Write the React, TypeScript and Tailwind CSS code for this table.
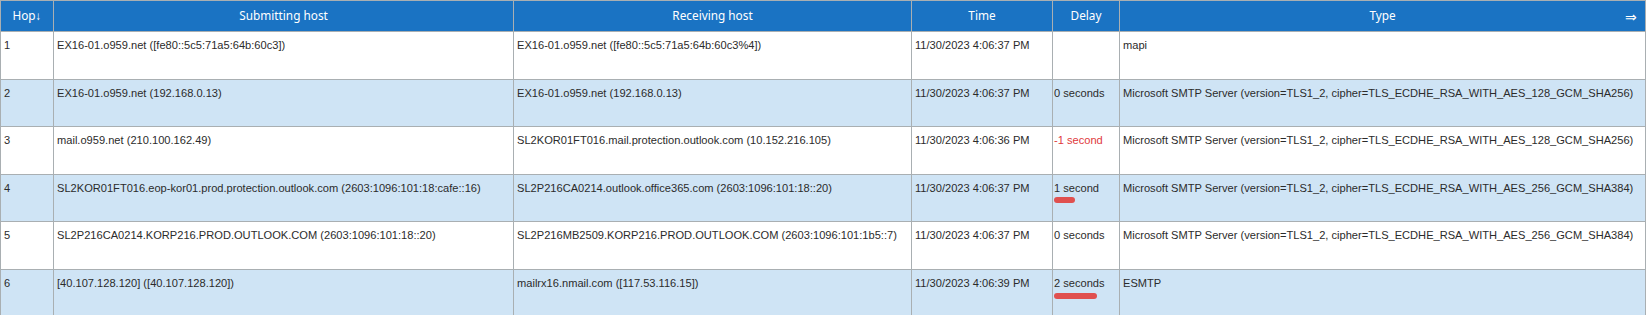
const rows = [
  {
    hop: "1",
    from: "EX16-01.o959.net ([fe80::5c5:71a5:64b:60c3])",
    by: "EX16-01.o959.net ([fe80::5c5:71a5:64b:60c3%4])",
    time: "11/30/2023 4:06:37 PM",
    delay: "",
    type: "mapi",
  },
  {
    hop: "2",
    from: "EX16-01.o959.net (192.168.0.13)",
    by: "EX16-01.o959.net (192.168.0.13)",
    time: "11/30/2023 4:06:37 PM",
    delay: "0 seconds",
    type: "Microsoft SMTP Server (version=TLS1_2, cipher=TLS_ECDHE_RSA_WITH_AES_128_GCM_SHA256)",
  },
  {
    hop: "3",
    from: "mail.o959.net (210.100.162.49)",
    by: "SL2KOR01FT016.mail.protection.outlook.com (10.152.216.105)",
    time: "11/30/2023 4:06:36 PM",
    delay: "-1 second",
    negative: true,
    type: "Microsoft SMTP Server (version=TLS1_2, cipher=TLS_ECDHE_RSA_WITH_AES_128_GCM_SHA256)",
  },
  {
    hop: "4",
    from: "SL2KOR01FT016.eop-kor01.prod.protection.outlook.com (2603:1096:101:18:cafe::16)",
    by: "SL2P216CA0214.outlook.office365.com (2603:1096:101:18::20)",
    time: "11/30/2023 4:06:37 PM",
    delay: "1 second",
    mark: "short",
    type: "Microsoft SMTP Server (version=TLS1_2, cipher=TLS_ECDHE_RSA_WITH_AES_256_GCM_SHA384)",
  },
  {
    hop: "5",
    from: "SL2P216CA0214.KORP216.PROD.OUTLOOK.COM (2603:1096:101:18::20)",
    by: "SL2P216MB2509.KORP216.PROD.OUTLOOK.COM (2603:1096:101:1b5::7)",
    time: "11/30/2023 4:06:37 PM",
    delay: "0 seconds",
    type: "Microsoft SMTP Server (version=TLS1_2, cipher=TLS_ECDHE_RSA_WITH_AES_256_GCM_SHA384)",
  },
  {
    hop: "6",
    from: "[40.107.128.120] ([40.107.128.120])",
    by: "mailrx16.nmail.com ([117.53.116.15])",
    time: "11/30/2023 4:06:39 PM",
    delay: "2 seconds",
    mark: "long",
    type: "ESMTP",
  },
];

export default function App() {
  return (
    <div className="w-[1646px] h-[315px] overflow-hidden bg-white font-['Liberation_Sans',Arial,sans-serif] text-[11.1px] text-[#2b2b2b]">
      <table className="w-[1646px] table-fixed border-collapse border border-[#a9afb2]">
        <colgroup>
          <col className="w-[53px]" />
          <col className="w-[460px]" />
          <col className="w-[398px]" />
          <col className="w-[141px]" />
          <col className="w-[67px]" />
          <col />
        </colgroup>
        <thead>
          <tr className="h-[31px] bg-[#1a73c3] font-['Noto_Sans',sans-serif] text-[11.8px] text-white">
            <th className="border border-[#a9afb2] font-normal">Hop↓</th>
            <th className="border border-[#a9afb2] font-normal">Submitting host</th>
            <th className="border border-[#a9afb2] font-normal">Receiving host</th>
            <th className="border border-[#a9afb2] font-normal">Time</th>
            <th className="border border-[#a9afb2] font-normal">Delay</th>
            <th className="relative border border-[#a9afb2] font-normal">
              Type
              <span className="absolute right-[8px] top-[5px] text-[14px]">⇒</span>
            </th>
          </tr>
        </thead>
        <tbody>
          {rows.map((r, i) => (
            <tr key={r.hop} className={`h-[47.6px] ${i % 2 === 1 ? "bg-[#cfe4f5]" : "bg-white"}`}>
              <td className="border border-[#a9afb2] px-[3px] pt-[5px] align-top">{r.hop}</td>
              <td className="border border-[#a9afb2] px-[3px] pt-[5px] align-top whitespace-nowrap">{r.from}</td>
              <td className="border border-[#a9afb2] px-[3px] pt-[5px] align-top whitespace-nowrap">{r.by}</td>
              <td className="border border-[#a9afb2] px-[3px] pt-[5px] align-top whitespace-nowrap">{r.time}</td>
              <td className="border border-[#a9afb2] px-[1px] pt-[5px] align-top whitespace-nowrap">
                <span className={r.negative ? "text-[#e0393b]" : ""}>{r.delay}</span>
                {r.mark === "short" && <div className="mt-[1px] h-[6px] w-[21px] rounded-full bg-[#e0504f]" />}
                {r.mark === "long" && <div className="mt-[1px] h-[6px] w-[43px] rounded-full bg-[#e0504f]" />}
              </td>
              <td className="border border-[#a9afb2] px-[3px] pt-[5px] align-top whitespace-nowrap">{r.type}</td>
            </tr>
          ))}
        </tbody>
      </table>
    </div>
  );
}
